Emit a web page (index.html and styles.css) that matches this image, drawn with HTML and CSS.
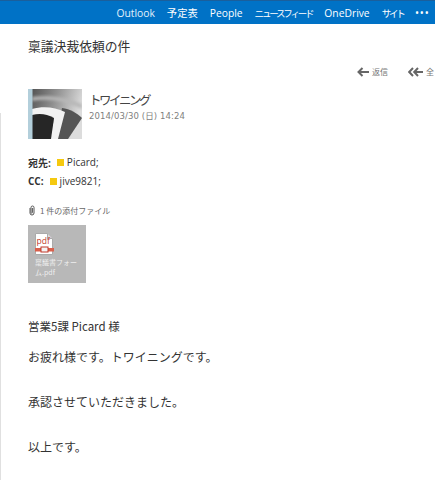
FILE: index.html
```html
<!DOCTYPE html>
<html lang="ja">
<head>
<meta charset="utf-8">
<title>稟議決裁依頼の件</title>
<link rel="stylesheet" href="styles.css">
</head>
<body>
<header class="topbar">
  <nav class="nav">
    <span class="nav-item active">Outlook</span>
    <span class="nav-item">予定表</span>
    <span class="nav-item">People</span>
    <span class="nav-item narrow">ニュースフィード</span>
    <span class="nav-item">OneDrive</span>
    <span class="nav-item narrow">サイト</span>
    <span class="nav-item dots">•••</span>
  </nav>
</header>
<main class="mail">
  <h1 class="subject">稟議決裁依頼の件</h1>
  <div class="actions">
    <span class="action">
      <svg class="arrow" width="12" height="10" viewBox="0 0 12 10"><path d="M5.500 1 1.500 5l4 4M2 5h10" fill="none" stroke="#666" stroke-width="2"/></svg>
      返信
    </span>
    <span class="action">
      <svg class="arrow" width="15" height="10" viewBox="0 0 15 10"><path d="M5 1 1.200 5 5 9M10 1 6.200 5l3.800 4M7 5h8" fill="none" stroke="#666" stroke-width="2"/></svg>
      全
    </span>
  </div>
  <div class="content">
    <div class="sender">
      <svg class="avatar" width="54" height="50" viewBox="0 0 54 50">
        <defs>
          <linearGradient id="bg" x1="0" y1="0" x2="1" y2="0.3"><stop offset="0" stop-color="#4a4a4a"/><stop offset="0.5" stop-color="#8f8f8f"/><stop offset="1" stop-color="#dcdcdc"/></linearGradient>
          <filter id="soft"><feGaussianBlur stdDeviation="0.5"/></filter>
          <filter id="softer"><feGaussianBlur stdDeviation="1.500"/></filter>
        </defs>
        <rect width="54" height="50" fill="url(#bg)"/>
        <path d="M4 12C20 9 38 12 54 20V15C38 8 20 6 4 8Z" fill="#b8b8b8" filter="url(#softer)"/>
        <g filter="url(#soft)">
          <path d="M34 19C42 20 49 24 54 29L40 50H28Z" fill="#555"/>
          <path d="M4 20C15 17 27 18 37 23L30 50H22L26 30C18 27 11 27 4 29Z" fill="#f2f2f2"/>
          <path d="M4 26C12 24 19 25 26 29L23 50H4Z" fill="#262626"/>
        </g>
        <rect width="4.500" height="50" fill="#b3cfdb"/>
      </svg>
      <div class="sender-text">
        <div class="sender-name">トワイニング</div>
        <div class="sender-date">2014/03/30 (日) 14:24</div>
      </div>
    </div>
    <div class="recipients">
      <div class="recipient"><b>宛先:</b><i class="presence"></i><span>Picard;</span></div>
      <div class="recipient"><b>CC:</b><i class="presence"></i><span>jive9821;</span></div>
    </div>
    <div class="attach-head">
      <svg width="8" height="11" viewBox="0 0 8 11"><path d="M2 3v5a2 2 0 0 0 4 0V2.500a1.500 1.500 0 0 0-3 0V7.500a.7.7 0 0 0 1.400 0V3" fill="none" stroke="#555" stroke-width="1"/></svg>
      <span>1 件の添付ファイル</span>
    </div>
    <div class="attachment">
      <svg class="pdf" width="19" height="22" viewBox="0 0 19 22">
        <path d="M.5.5h12l5 5v16H.5Z" fill="#fff" stroke="#aaa"/>
        <path d="M12.500.5v5h5" fill="#ddd" stroke="#aaa"/>
        <rect x="0" y="15" width="19" height="3.500" fill="#d9604c"/>
        <rect x="6" y="14" width="7" height="5" fill="#f4f4f4" stroke="#c0392b"/>
        <text x="1.500" y="11" class="pdf-label">pdf</text>
      </svg>
      <div class="attach-name">稟議書フォーム.pdf</div>
    </div>
    <div class="body">
      <p class="greeting">営業5課 Picard 様</p>
      <p>お疲れ様です。トワイニングです。</p>
      <p class="spaced">承認させていただきました。</p>
      <p class="spaced">以上です。</p>
    </div>
  </div>
</main>
</body>
</html>
```

FILE: styles.css
```css
* { box-sizing: border-box; }
html, body { margin: 0; padding: 0; }
body {
  width: 435px;
  height: 480px;
  overflow: hidden;
  background: #fff;
  font-family: "Noto Sans CJK JP", "Open Sans", sans-serif;
  color: #333;
}
.topbar {
  height: 24px;
  background: #0072c6;
  border-top: 1px solid #1a5f9c;
  overflow: hidden;
}
.nav {
  display: flex;
  justify-content: flex-end;
  align-items: center;
  gap: 12px;
  height: 23px;
  padding-right: 5px;
  white-space: nowrap;
}
.nav-item {
  font-family: "Open Sans", "Noto Sans CJK JP", sans-serif;
  font-size: 10.300px;
  color: #fff;
  position: relative;
}
.nav-item.narrow { font-size: 9.500px; letter-spacing: -2.200px; }
.nav-item.dots { font-size: 8px; font-weight: 700; letter-spacing: 1.800px; }
.nav-item.active { color: #e3f1fb; }
.nav-item.active::after {
  content: "";
  position: absolute;
  left: 50%;
  bottom: -7px;
  margin-left: -3px;
  border: 3px solid transparent;
  border-top: 0;
  border-bottom-color: #fff;
}
.subject {
  margin: 13px 0 0 28px;
  font-size: 12.800px;
  font-weight: 400;
  line-height: 18px;
  color: #333;
}
.actions {
  display: flex;
  gap: 20px;
  height: 14px;
  margin-top: 10px;
  padding-left: 357px;
  font-size: 8px;
  line-height: 14px;
  color: #777;
  white-space: nowrap;
}
.action { display: flex; align-items: center; gap: 3px; }
.content {
  margin-top: 10px;
  padding: 0 0 0 28px;
  height: 392px;
  position: relative;
}
.content::before {
  content: "";
  position: absolute;
  left: 0;
  top: 24px;
  bottom: 0;
  width: 1px;
  background: #e0e0e0;
}
.sender { display: flex; gap: 7px; height: 50px; }
.avatar { display: block; flex: none; }
.sender-text { padding-top: 2px; }
.sender-name { font-size: 12.500px; line-height: 18px; color: #444; letter-spacing: -2.500px; }
.sender-date { font-family: "DejaVu Sans", "Noto Sans CJK JP", sans-serif; font-size: 8.500px; line-height: 12px; margin-top: 1px; color: #808080; letter-spacing: .1px; }
.recipients { margin-top: 15px; }
.recipient {
  display: flex;
  align-items: center;
  height: 16px;
  margin-bottom: 3px;
  font-family: "Open Sans", "Noto Sans CJK JP", sans-serif;
  font-size: 10px;
  color: #333;
}
.recipient b { font-weight: 700; }
.presence { width: 7px; height: 7px; background: #f5c90f; margin: 0 3px 0 6px; }
.attach-head {
  display: flex;
  align-items: center;
  gap: 4px;
  margin-top: 15px;
  height: 12px;
  font-size: 8px;
  color: #666;
}
.attachment {
  width: 58px;
  height: 58px;
  margin-top: 9px;
  padding: 8px 7px 0;
  background: #b8b8b8;
}
.pdf { display: block; }
.pdf-label { font-family: "Open Sans", sans-serif; font-size: 8.500px; fill: #c0392b; }
.attach-name {
  margin-top: 2px;
  font-size: 7px;
  line-height: 10px;
  color: #eee;
  word-break: break-all;
}
.body { margin-top: 35px; color: #333; }
.body p { margin: 0; font-size: 12px; line-height: 23px; }
.body .greeting { font-size: 11.500px; line-height: 16px; margin-bottom: 11px; }
.body .spaced { margin-top: 22px; }
```
